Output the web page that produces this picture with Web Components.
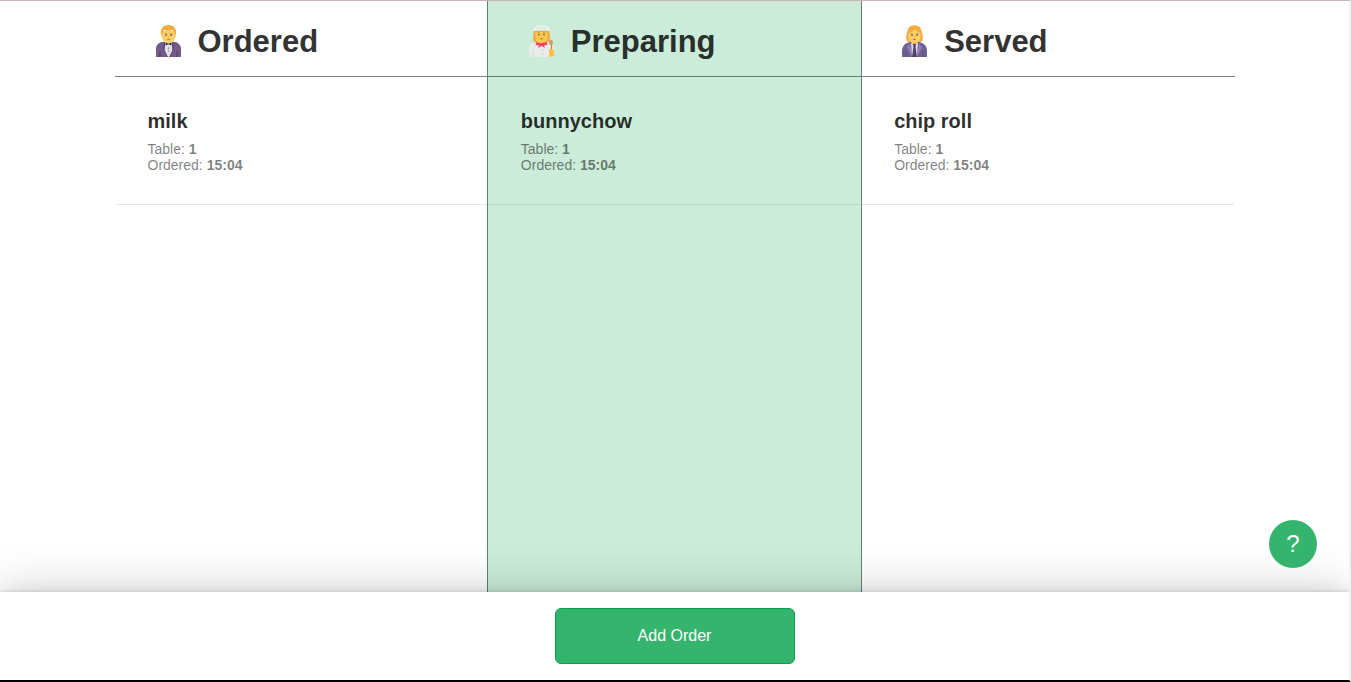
<!DOCTYPE html>
<html lang="en">
<head>
<meta charset="utf-8">
<title>Orders</title>
<style>
  html, body { margin: 0; height: 100%; }
  body { font-family: "Liberation Sans", Arial, sans-serif; color: #333; background: #fff; }
</style>
</head>
<body>
<order-app>
  <order-column heading="Ordered" icon="waiter">
    <order-card name="milk" table="1" time="15:04"></order-card>
  </order-column>
  <order-column heading="Preparing" icon="cook" active>
    <order-card name="bunnychow" table="1" time="15:04"></order-card>
  </order-column>
  <order-column heading="Served" icon="manager">
    <order-card name="chip roll" table="1" time="15:04"></order-card>
  </order-column>
  <help-button slot="help"></help-button>
  <add-order slot="footer"></add-order>
</order-app>

<script>
const icons = {
  waiter: `
    <path d="M3 32v-7c0-5 3-8 8-8h9c5 0 8 3 8 8v7z" fill="#6c4f80"/>
    <path d="M3 32v-7c0-4 2-7 6-8l6 15zM28 32v-7c0-4-2-7-6-8l-6 15z" fill="#765a8c"/>
    <path d="M7 32v-6M24 32v-6" stroke="#4f3b62" stroke-width="1"/>
    <path d="M12 17h7l.5 9-3 6h-2l-3-6z" fill="#e5e1e8"/>
    <path d="M11.500 17l-.5 8 3.500 7M19.500 17l.5 8-3.500 7" stroke="#433b6b" stroke-width=".8" fill="none"/>
    <path d="M13 15h5v2c0 2-5 2-5 0z" fill="#f0a94b"/>
    <path d="M12.500 17.500l3 1.200 3-1.200v3l-3-1.200-3 1.200z" fill="#33283d"/>
    <circle cx="15.500" cy="23" r=".6" fill="#443b50"/><circle cx="15.500" cy="26" r=".6" fill="#443b50"/>
    <path d="M9 6h13v4c1 0 1 3 0 3-.5 3-3.500 5-6.500 5S9.500 16 9 13c-1 0-1-3 0-3z" fill="#ffd067"/>
    <path d="M8 9C7 4 10 0 15.500 0S24 4 23 9l-1 2c0-3-1-4-2-6-3 1-6 1-9 0-1 2-2 3-2 6z" fill="#f4aa41"/>
    <path d="M11.500 8.300h2.500M17 8.300h2.500" stroke="#c99342" stroke-width=".7"/>
    <circle cx="13" cy="10" r=".9" fill="#6b5961"/><circle cx="18" cy="10" r=".9" fill="#6b5961"/>
    <path d="M15 11.500l.5 1 .5-1" stroke="#ee9a42" stroke-width=".7" fill="none"/>
    <path d="M13.500 14h4q-2 1.700-4 0z" fill="#d64a59"/>`,
  cook: `
    <path d="M3 32v-7c0-5 3-8 8-8h9c5 0 8 3 8 8v7z" fill="#e7eceb"/>
    <path d="M7 32v-7M24 32v-7" stroke="#cbd8d3" stroke-width=".8"/>
    <circle cx="17" cy="25" r=".5" fill="#9fb3ab"/><circle cx="17" cy="29" r=".5" fill="#9fb3ab"/>
    <path d="M8 6h15c1 4 1.500 9-.5 11-2 1.500-12 1.500-14 0S7 10 8 6z" fill="#f3a640"/>
    <path d="M13 14h5v4h-5z" fill="#f0a344"/>
    <path d="M9.500 7h12v6c0 3-2.500 5-6 5s-6-2-6-5z" fill="#ffc94d"/>
    <path d="M8.500 6c-2-1-1.500-4 1-4.500C11-.5 20-.5 21.500 1.500c2.500.5 3 3.500 1 4.500-4-1.200-10-1.200-14 0z" fill="#e9edec"/>
    <path d="M12 2l.5 2.500M15.500 1.500v3M19 2l-.5 2.500" stroke="#ccd7d3" stroke-width=".6"/>
    <path d="M11.300 7.500h2.700M17 7.500h2.700" stroke="#c79245" stroke-width=".6"/>
    <circle cx="13" cy="9.500" r="1" fill="#776c69"/><circle cx="18" cy="9.500" r="1" fill="#776c69"/>
    <path d="M13.500 13.500h4q-2 2-4 0z" fill="#d54250"/>
    <path d="M10.500 17q2.500 1.500 5 1t5-1l1 3-3.500.5 1 2.500-3.500-2-3.500 2 1-2.500-3.500-.5z" fill="#ed4264"/>
    <path d="M25.500 20v7" stroke="#c68345" stroke-width="1.200"/>
    <ellipse cx="25" cy="17.500" rx="1.900" ry="2.800" fill="#d79a5b"/>
    <path d="M23 25q0-2 2-1l3 1v6q-2 1-5 1z" fill="#ffc142"/>`,
  manager: `
    <path d="M9 4C11-1 20-1 22 4c1 4 3 9 1 12l-3 2h-9l-3-2C6 13 8 8 9 4z" fill="#f4ab3f"/>
    <path d="M3 32v-6c0-5 3-8 8-9h9c5 1 8 4 8 9v6z" fill="#6e6291"/>
    <path d="M11 18l-3 4 5 10M20 18l3 4-5 10" fill="#9a79bd"/>
    <path d="M7 32v-6M24 32v-6" stroke="#534871" stroke-width=".8"/>
    <path d="M12 18h7l-1 14h-5z" fill="#ddd7e6"/>
    <path d="M13 15h5v3l-2.500 2-2.500-2z" fill="#f1a542"/>
    <path d="M14 19h3l-.5 3 1.500 10h-5l1.500-10z" fill="#514168"/>
    <path d="M9.500 8c3-1 5-2 6-4 1 2 3 3 6 4v5c0 3-2.500 5-6 5s-6-2-6-5z" fill="#ffd067"/>
    <path d="M11 8.500h3M17 8.500h3" stroke="#c79245" stroke-width=".6"/>
    <circle cx="13" cy="10" r=".9" fill="#6c5d66"/><circle cx="18" cy="10" r=".9" fill="#6c5d66"/>
    <path d="M15 11.500l.5 1 .5-1" stroke="#e99442" stroke-width=".7" fill="none"/>
    <path d="M13.500 14h4q-2 2-4 0z" fill="#d74a58"/>`
};

class OrderApp extends HTMLElement {
  constructor() {
    super();
    this.attachShadow({ mode: "open" }).innerHTML = `
      <style>
        :host { display: flex; flex-direction: column; min-height: 100vh; box-sizing: border-box;
          border-top: 1px solid #c7b5b3; border-right: 2px solid #f1f1f1; border-bottom: 2px solid #000; }
        main { flex: 1; display: grid; grid-template-columns: repeat(3, minmax(0, 1fr));
          width: 100%; max-width: 1120px; margin: 0 auto; }
        footer { position: relative; display: flex; justify-content: center; padding: 16px; background: #fff;
          box-shadow: 0 0 4px rgba(0,0,0,.16), 0 0 16px rgba(0,0,0,.08), 0 -8px 44px rgba(0,0,0,.14);
          clip-path: inset(-100px 0 0 0); }
        .help { position: absolute; right: 32px; bottom: 100%; margin-bottom: 24px; }
      </style>
      <main><slot></slot></main>
      <footer><slot name="footer"></slot><div class="help"><slot name="help"></slot></div></footer>`;
  }
}

class OrderColumn extends HTMLElement {
  constructor() {
    super();
    this.attachShadow({ mode: "open" }).innerHTML = `
      <style>
        :host { display: block; }
        :host([active]) { margin: 0 -1px; background: #cbecd9; background-clip: padding-box;
          border: solid #657f70; border-width: 0 1px; }
        header { display: flex; align-items: center; gap: 13px; height: 76px; padding: 5px 38px 0;
          box-sizing: border-box; border-bottom: 1px solid #7f7f7f; }
        :host([active]) header { border-color: #657f70; }
        svg { width: 32px; height: 32px; flex: none; }
        h2 { margin: 0; padding-top: 2px; font-size: 31px; line-height: 36px; font-weight: 700; color: #333; }
        :host([active]) h2 { color: #29302c; }
        .list { padding: 0 1px; }
      </style>
      <header><svg viewBox="0 0 32 32" aria-hidden="true"></svg><h2></h2></header>
      <div class="list" role="list"><slot></slot></div>`;
  }
  connectedCallback() {
    this.shadowRoot.querySelector("svg").innerHTML = icons[this.getAttribute("icon")];
    this.shadowRoot.querySelector("h2").textContent = this.getAttribute("heading");
  }
}

class OrderCard extends HTMLElement {
  constructor() {
    super();
    this.attachShadow({ mode: "open" }).innerHTML = `
      <style>
        :host { display: block; box-sizing: border-box; min-height: 128px; padding: 32px 32px 16px;
          border-bottom: 1px solid rgba(0,0,0,.1); }
        h3 { margin: 0 0 8px; font-size: 20px; line-height: 24px; color: rgba(0,0,0,.83); }
        p { margin: 0; font-size: 14px; line-height: 16px; color: rgba(0,0,0,.5); }
      </style>
      <h3></h3>
      <p>Table: <b class="table"></b></p>
      <p>Ordered: <b class="time"></b></p>`;
  }
  connectedCallback() {
    this.setAttribute("role", "listitem");
    const root = this.shadowRoot;
    root.querySelector("h3").textContent = this.getAttribute("name");
    root.querySelector(".table").textContent = this.getAttribute("table");
    root.querySelector(".time").textContent = this.getAttribute("time");
  }
}

class AddOrder extends HTMLElement {
  constructor() {
    super();
    this.attachShadow({ mode: "open" }).innerHTML = `
      <style>
        :host { display: block; }
        button { width: 240px; height: 56px; display: block; font: inherit; font-size: 16px; color: #fff;
          background: #35b46e; border: 1px solid #0b9f4f; border-radius: 6px; cursor: pointer; }
      </style>
      <button type="button">Add Order</button>`;
  }
}

class HelpButton extends HTMLElement {
  constructor() {
    super();
    this.attachShadow({ mode: "open" }).innerHTML = `
      <style>
        :host { display: block; }
        button { width: 48px; height: 48px; display: block; padding: 0; border: 0; border-radius: 50%;
          background: #35b46e; color: #fff; font: inherit; font-size: 24px; cursor: pointer; }
      </style>
      <button type="button">?</button>`;
  }
}

customElements.define("order-app", OrderApp);
customElements.define("order-column", OrderColumn);
customElements.define("order-card", OrderCard);
customElements.define("add-order", AddOrder);
customElements.define("help-button", HelpButton);
</script>
</body>
</html>
